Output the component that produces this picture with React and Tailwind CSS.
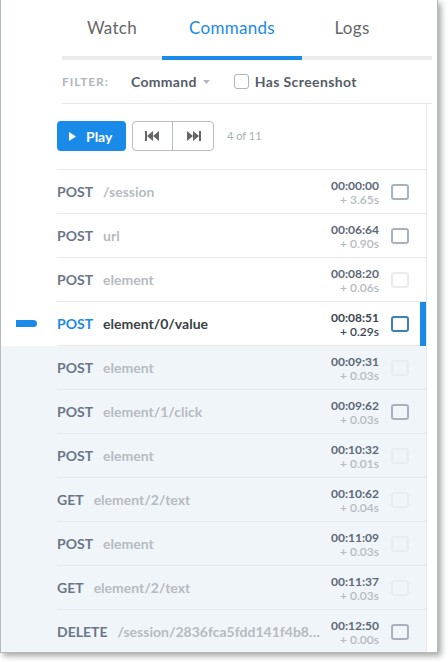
import React from "react";

const rows = [
  { method: "POST", path: "/session", time: "00:00:00", delta: "+ 3.65s", box: "on" },
  { method: "POST", path: "url", time: "00:06:64", delta: "+ 0.90s", box: "on" },
  { method: "POST", path: "element", time: "00:08:20", delta: "+ 0.06s", box: "off" },
  { method: "POST", path: "element/0/value", time: "00:08:51", delta: "+ 0.29s", box: "on", active: true },
  { method: "POST", path: "element", time: "00:09:31", delta: "+ 0.03s", box: "off" },
  { method: "POST", path: "element/1/click", time: "00:09:62", delta: "+ 0.03s", box: "on" },
  { method: "POST", path: "element", time: "00:10:32", delta: "+ 0.01s", box: "off" },
  { method: "GET", path: "element/2/text", time: "00:10:62", delta: "+ 0.04s", box: "off" },
  { method: "POST", path: "element", time: "00:11:09", delta: "+ 0.03s", box: "off" },
  { method: "GET", path: "element/2/text", time: "00:11:37", delta: "+ 0.03s", box: "off" },
  { method: "DELETE", path: "/session/2836fca5fdd141f4b841f0a27c9e", time: "00:12:50", delta: "+ 0.00s", box: "on" },
];

function SkipBack() {
  return (
    <svg width="15" height="10" viewBox="0 0 15 10" fill="#666">
      <rect x="0" y="0" width="2" height="10" />
      <polygon points="8,0 8,10 2,5" />
      <polygon points="14,0 14,10 8,5" />
    </svg>
  );
}

function SkipForward() {
  return (
    <svg width="15" height="10" viewBox="0 0 15 10" fill="#666">
      <polygon points="1,0 1,10 7,5" />
      <polygon points="7,0 7,10 13,5" />
      <rect x="13" y="0" width="2" height="10" />
    </svg>
  );
}

function Row({ row, index, activeIndex }) {
  const after = index > activeIndex;
  const boxClass = row.active
    ? "border-[#3a80c6]"
    : row.box === "on"
    ? "border-[#a9b2bc]"
    : "border-[#e9ecef]";
  return (
    <div className={`relative h-[44px] ${after ? "bg-[#f0f5fa]" : "bg-white"}`}>
      {row.active && (
        <>
          <div className="absolute left-[15px] top-[18px] w-[21px] h-[7px] bg-[#1a8ae8] rounded-r-full" />
          <div className="absolute right-0 top-0 w-[6px] h-[44px] bg-[#1a8ae8]" />
        </>
      )}
      <div className="ml-[56px] h-full border-b border-[#e6e9ec] flex items-center">
        <span
          className={`text-[14px] font-bold mr-[10px] ${row.active ? "text-[#1a8ae8]" : "text-[#6b7789]"}`}
        >
          {row.method}
        </span>
        <span
          className={`flex-1 min-w-0 truncate text-[14px] font-bold ${row.active ? "text-[#3a3f45]" : "text-[#b6bbc0]"}`}
        >
          {row.path}
        </span>
        <div className="ml-[4px] text-right pt-[1px]">
          <div className={`text-[12px] leading-[14px] font-bold ${row.active ? "text-[#3e4650]" : "text-[#5d6878]"}`}>{row.time}</div>
          <div className={`text-[12px] leading-[13px] font-semibold ${row.active ? "text-[#3e4650]" : "text-[#b6bbc0]"}`}>{row.delta}</div>
        </div>
        <div className={`ml-[12px] mr-[17px] w-[18px] h-[16px] border-2 rounded-[3px] shrink-0 ${boxClass}`} />
      </div>
    </div>
  );
}

export default function App() {
  const activeIndex = rows.findIndex((r) => r.active);
  return (
    <div className="w-[448px] h-[662px] bg-white" style={{ fontFamily: "Lato, 'Open Sans', sans-serif" }}>
      <div className="w-[438px] h-[653px] bg-white border-l border-r border-b border-[#b3bcbc] shadow-[3px_3px_6px_rgba(0,0,0,0.35)] flex flex-col overflow-hidden">
        <div className="ml-[61px] w-[370px]">
          <div className="h-[56px] flex items-center text-[17px] tracking-[0.3px]">
            <div className="w-[100px] text-center text-[#666]">Watch</div>
            <div className="w-[140px] text-center text-[#1a8ae8]">Commands</div>
            <div className="w-[100px] text-center text-[#666]">Logs</div>
          </div>
          <div className="h-[4px] bg-[#ebebeb] flex">
            <div className="ml-[100px] w-[140px] bg-[#1a8ae8]" />
          </div>
          <div className="h-[44px] border-b border-[#e8e8e8] flex items-center">
            <span className="w-[47px] text-[12px] font-bold text-[#b2b6ba] tracking-[0.9px]">FILTER:</span>
            <span className="ml-[22px] text-[14px] font-bold text-[#555c66] tracking-[0.3px]">Command</span>
            <svg className="ml-[6px]" width="7" height="4" viewBox="0 0 7 4" fill="#b5b9bd">
              <polygon points="0,0 7,0 3.5,4" />
            </svg>
            <div className="ml-[24px] w-[15px] h-[15px] border border-[#b0b4b8] rounded-[3px]" />
            <span className="ml-[6px] text-[14px] font-bold text-[#555c66] tracking-[0.4px]">Has Screenshot</span>
          </div>
        </div>
        <div className="w-[426px] flex-1 border-r border-[#e6e9ec]">
          <div className="h-[66px] ml-[56px] border-b border-[#e6e9ec] flex items-start pt-[17px]">
            <button className="w-[69px] h-[30px] bg-[#1a8ae8] rounded-[4px] text-white text-[14px] font-bold flex items-center pl-[12px]">
              <svg width="7" height="9" viewBox="0 0 7 9" fill="white">
                <polygon points="0,0 7,4.5 0,9" />
              </svg>
              <span className="ml-[10px]">Play</span>
            </button>
            <div className="ml-[6px] w-[82px] h-[30px] border border-[#b9bec3] rounded-[4px] flex">
              <div className="w-[40px] border-r border-[#b9bec3] flex items-center justify-center">
                <SkipBack />
              </div>
              <div className="flex-1 flex items-center justify-center">
                <SkipForward />
              </div>
            </div>
            <span className="ml-[13px] h-[30px] flex items-center text-[11px] text-[#a9afb5]">4 of 11</span>
          </div>
          {rows.map((row, i) => (
            <Row key={i} row={row} index={i} activeIndex={activeIndex} />
          ))}
        </div>
      </div>
    </div>
  );
}
